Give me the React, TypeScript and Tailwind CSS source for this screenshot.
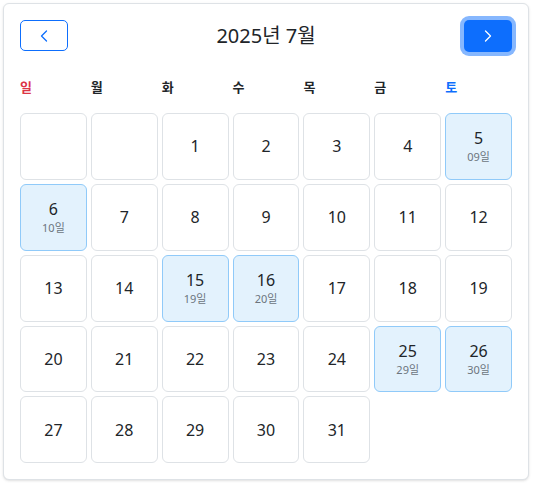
import { ReactNode } from 'react';

const FONT = { fontFamily: '"Noto Sans", "Noto Sans CJK KR", sans-serif' };

const WEEKDAYS = ['일', '월', '화', '수', '목', '금', '토'];

// day -> sub label for marked days
const MARKED: Record<number, string> = {
  5: '09일',
  6: '10일',
  15: '19일',
  16: '20일',
  25: '29일',
  26: '30일',
};

function Chevron({ dir }: { dir: 'left' | 'right' }) {
  return (
    <svg width="16" height="16" viewBox="0 0 16 16" fill="none">
      {dir === 'left' ? (
        <path d="M10.5 3 5.5 8l5 5" stroke="currentColor" strokeWidth="1.3" strokeLinecap="round" strokeLinejoin="round" />
      ) : (
        <path d="M5.5 3l5 5-5 5" stroke="currentColor" strokeWidth="1.3" strokeLinecap="round" strokeLinejoin="round" />
      )}
    </svg>
  );
}

function DayCell({ day }: { day: number | null }) {
  if (day === null) {
    return <div className="aspect-square rounded-md border border-[#dee2e6] bg-white" />;
  }
  const sub = MARKED[day];
  let content: ReactNode;
  if (sub) {
    content = (
      <>
        <span className="text-[16px] leading-[20px] text-[#212529]">{day}</span>
        <span className="text-[11px] leading-[14px] text-[#6c757d] mt-[2px]">{sub}</span>
      </>
    );
  } else {
    content = <span className="text-[16px] leading-[20px] text-[#212529]">{day}</span>;
  }
  return (
    <div
      className={`aspect-square rounded-md border flex flex-col items-center justify-center ${
        sub ? 'bg-[#e3f2fd] border-[#90caf9]' : 'bg-white border-[#dee2e6]'
      }`}
    >
      {content}
    </div>
  );
}

export default function App() {
  // July 2025 starts on Tuesday
  const cells: (number | null)[] = [null, null];
  for (let d = 1; d <= 31; d++) cells.push(d);

  return (
    <div className="p-[3px] bg-white" style={FONT}>
      <div className="w-[526px] rounded-md border border-[#dee2e6] bg-white shadow-sm p-4">
        <div className="flex items-center justify-between h-[31px]">
          <button className="w-[48px] h-[31px] rounded-[5px] border border-[#0d6efd] text-[#0d6efd] flex items-center justify-center">
            <Chevron dir="left" />
          </button>
          <h2 className="text-[20px] text-[#212529]">2025년 7월</h2>
          <button className="w-[48px] h-[32px] rounded-[5px] bg-[#0d6efd] text-white flex items-center justify-center ring-4 ring-[#86b7fe]">
            <Chevron dir="right" />
          </button>
        </div>

        <div className="grid grid-cols-7 gap-1 mt-[26px] mb-4">
          {WEEKDAYS.map((w, i) => (
            <div
              key={w}
              className={`text-[13px] font-bold leading-[20px] ${
                i === 0 ? 'text-[#dc3545]' : i === 6 ? 'text-[#0d6efd]' : 'text-[#212529]'
              }`}
            >
              {w}
            </div>
          ))}
        </div>

        <div className="grid grid-cols-7 gap-1">
          {cells.map((d, i) => (
            <DayCell key={i} day={d} />
          ))}
        </div>
      </div>
    </div>
  );
}
